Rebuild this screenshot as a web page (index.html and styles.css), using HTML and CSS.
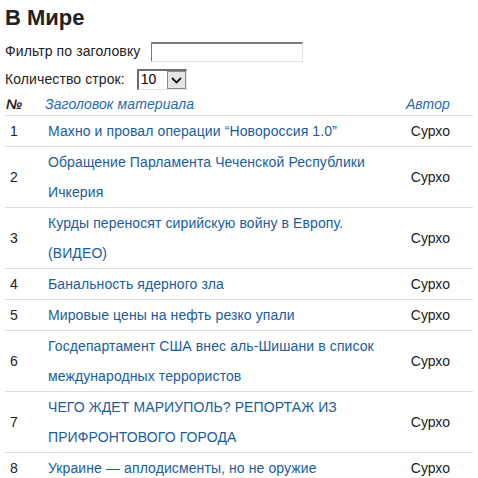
FILE: index.html
```html
<!DOCTYPE html>
<html lang="ru">
<head>
<meta charset="utf-8">
<title>В Мире</title>
<link rel="stylesheet" href="styles.css">
</head>
<body>
<h1 class="title">В Мире</h1>
<div class="filters">
  <div class="filter-row">
    <label class="filter-label" for="f">Фильтр по заголовку</label>
    <input class="filter-input" id="f" type="text">
  </div>
  <div class="filter-row">
    <span class="filter-label">Количество строк:</span>
    <div class="select">
      <span class="select-value">10</span>
      <span class="select-btn"><svg width="11" height="7" viewBox="0 0 11 7"><path d="M1 1 L5.5 5.5 L10 1" fill="none" stroke="#111" stroke-width="1.8"/></svg></span>
    </div>
  </div>
</div>
<table class="list">
  <colgroup><col class="c-num"><col class="c-title"><col class="c-author"></colgroup>
  <thead>
    <tr><th class="h-num">№</th><th class="h-title"><a href="#">Заголовок материала</a></th><th class="h-author"><a href="#">Автор</a></th></tr>
  </thead>
  <tbody>
    <tr><td class="num">1</td><td class="ttl"><a href="#">Махно и провал операции “Новороссия 1.0”</a></td><td class="auth">Сурхо</td></tr>
    <tr><td class="num">2</td><td class="ttl"><a href="#">Обращение Парламента Чеченской Республики Ичкерия</a></td><td class="auth">Сурхо</td></tr>
    <tr><td class="num">3</td><td class="ttl"><a href="#">Курды переносят сирийскую войну в Европу. (ВИДЕО)</a></td><td class="auth">Сурхо</td></tr>
    <tr><td class="num">4</td><td class="ttl"><a href="#">Банальность ядерного зла</a></td><td class="auth">Сурхо</td></tr>
    <tr><td class="num">5</td><td class="ttl"><a href="#">Мировые цены на нефть резко упали</a></td><td class="auth">Сурхо</td></tr>
    <tr><td class="num">6</td><td class="ttl"><a href="#">Госдепартамент США внес аль-Шишани в список международных террористов</a></td><td class="auth">Сурхо</td></tr>
    <tr><td class="num">7</td><td class="ttl"><a href="#">ЧЕГО ЖДЕТ МАРИУПОЛЬ? РЕПОРТАЖ ИЗ ПРИФРОНТОВОГО ГОРОДА</a></td><td class="auth">Сурхо</td></tr>
    <tr><td class="num">8</td><td class="ttl"><a href="#">Украине — аплодисменты, но не оружие</a></td><td class="auth">Сурхо</td></tr>
  </tbody>
</table>
</body>
</html>
```

FILE: styles.css
```css
html, body {
  margin: 0;
  padding: 0;
  background: #fff;
}
body {
  margin: 5px;
  font-family: "Liberation Sans", Arial, sans-serif;
  font-size: 14px;
  color: #222;
}
.title {
  margin: 0 0 11px;
  font-size: 22px;
  line-height: 25px;
  font-weight: bold;
  color: #222;
}
.filters {
  display: flex;
  flex-direction: column;
  gap: 7px;
  margin-bottom: 3px;
}
.filter-row {
  display: flex;
  align-items: center;
  height: 21px;
}
.filter-label {
  line-height: 21px;
  letter-spacing: 0.1px;
}
.filter-input {
  margin: 0 0 0 11px;
  width: 152px;
  height: 20px;
  box-sizing: border-box;
  border: 1px solid;
  border-color: #7a7a7a #e3e3e3 #e3e3e3 #7a7a7a;
  border-top-width: 2px;
  padding: 0 2px;
  font: inherit;
  background: #fff;
}
.select {
  margin-left: 12px;
  width: 50px;
  height: 21px;
  box-sizing: border-box;
  display: flex;
  align-items: stretch;
  border: 1px solid;
  border-color: #6e6e6e #e3e3e3 #e3e3e3 #6e6e6e;
  border-top-width: 2px;
  border-left-width: 2px;
  background: #fff;
}
.select-value {
  flex: 1;
  padding-left: 2px;
  line-height: 17px;
  font-size: 14px;
  color: #000;
}
.select-btn {
  width: 19px;
  box-sizing: border-box;
  border: 1px solid #8a8a8a;
  background: #e5e5e5;
  display: flex;
  align-items: center;
  justify-content: center;
}
.list {
  width: 100%;
  border-collapse: collapse;
  table-layout: fixed;
}
.c-num { width: 38px; }
.c-title { width: 342px; }
.c-author { width: 88px; }
.list th {
  font-style: italic;
  font-weight: normal;
  line-height: 22px;
  padding: 0;
  text-align: left;
  border-bottom: 1px solid #dcdcdc;
}
.list th a {
  color: #1f6aae;
  text-decoration: none;
  letter-spacing: 0.1px;
}
.list th.h-num {
  padding-left: 1px;
  font-weight: bold;
  color: #222;
}
.list th.h-title {
  padding-left: 2px;
}
.list th.h-author {
  text-align: right;
  padding-right: 23px;
}
.list td {
  padding: 0;
  line-height: 30px;
  border-bottom: 1px solid #dcdcdc;
  vertical-align: middle;
}
.list td.num {
  padding-left: 5px;
}
.list td.ttl {
  padding-left: 5px;
}
.list td.ttl a {
  color: #1a5d9c;
  text-decoration: none;
  letter-spacing: 0.1px;
}
.list td.auth {
  text-align: right;
  padding-right: 23px;
}
```
